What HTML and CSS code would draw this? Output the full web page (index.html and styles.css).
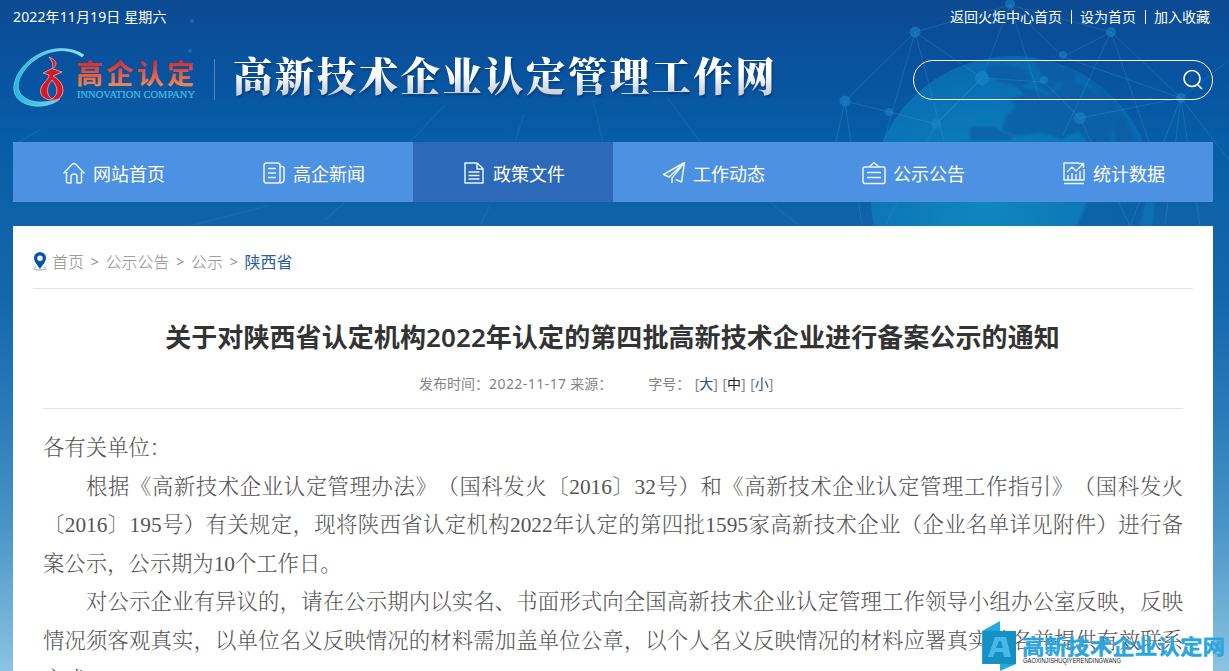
FILE: index.html
```html
<!DOCTYPE html>
<html lang="zh-CN">
<head>
<meta charset="utf-8">
<title>高新技术企业认定管理工作网</title>
<link rel="stylesheet" href="styles.css">
</head>
<body>
<div class="page">
  <svg class="backdrop" width="1229" height="226" viewBox="0 0 1229 226" aria-hidden="true">
    <defs>
      <radialGradient id="globe" gradientUnits="userSpaceOnUse" cx="985" cy="200" r="170">
        <stop offset="0" stop-color="#10a0cc" stop-opacity=".6"/>
        <stop offset=".7" stop-color="#0a8ac6" stop-opacity=".5"/>
        <stop offset="1" stop-color="#0a80c4" stop-opacity=".4"/>
      </radialGradient>
      <filter id="soft"><feGaussianBlur stdDeviation="1.200"/></filter>
    </defs>
    <circle cx="1013" cy="198" r="142" fill="url(#globe)"/>
    <g fill="#0b5aa2" opacity=".7" filter="url(#soft)">
      <path d="M985 67l18-3 22 6 8 10-13 7-20-5-12-7zM1034 60l20 1 10 8 8-2 5 8-8 14-11-9-8 13-11-6 3-12z"/>
      <path d="M1018 87l18 3 12 6 20-14 14 3 22 12 10 18-4 30h-20l-12-14-16 8-20-6-26 3-14-6 4-14 10-9-6-8 14-4zM970 127h26l6 6 10 2v5h-42z"/>
      <path d="M1075 72q40 14 62 70h-22q-2-25-12-38-4-18-28-32zM1087 202h58l-6 24h-62z"/>
    </g>
    <g fill="none" stroke="#42a4dd" stroke-width="1" opacity=".25">
      <path d="M845 101L915 32L1010 5L1111 32L1181 98L1229 60M915 32L873 180M915 32L982 78L1010 5L1063 57L1111 32L1063 135M1010 5L1040 100M845 101L889 112L936 124L982 78L1044 82L1080 118L1181 98L1229 160M845 101L834 150M845 101L862 226M936 124L885 226M1080 118L1130 226L1181 98L1165 226M982 78L936 124M1063 57L1181 98L1200 226M1111 32L1150 145M915 32L945 145"/>
    </g>
    <g fill="none" stroke="#42a4dd" stroke-width="1.500" opacity=".13">
      <path d="M40 130L18 142M270 205L190 226M524 114L515 142M445 105L410 142M593 100L603 142M667 97L700 142M490 205L480 226M770 202L800 226M345 202L325 220"/>
    </g>
    <g fill="#1e8bd1" opacity=".5">
      <circle cx="915" cy="32" r="5.500"/><circle cx="1010" cy="4" r="5"/><circle cx="1111" cy="32" r="5"/>
      <circle cx="845" cy="101" r="5.500"/><circle cx="982" cy="78" r="7"/><circle cx="889" cy="112" r="4"/>
      <circle cx="936" cy="124" r="5"/><circle cx="1080" cy="118" r="6"/><circle cx="1181" cy="98" r="5"/>
      <circle cx="1044" cy="80" r="4"/><circle cx="1063" cy="55" r="4"/><circle cx="192" cy="21" r="2"/><circle cx="190" cy="51" r="2"/>
    </g>
  </svg>

  <div class="topbar">
    <span class="today">2022年11月19日 星期六</span>
    <nav class="toplinks"><a>返回火炬中心首页</a><i></i><a>设为首页</a><i></i><a>加入收藏</a></nav>
  </div>

  <header class="masthead">
    <svg class="logo" width="184" height="64" viewBox="0 0 184 64">
      <defs>
        <linearGradient id="ring" x1="0" y1="0" x2="1" y2="0"><stop offset="0" stop-color="#22b9df"/><stop offset="1" stop-color="#a5e0f3"/></linearGradient>
        <linearGradient id="brand" x1="0" y1="0" x2="0" y2="1"><stop offset=".2" stop-color="#d8282c"/><stop offset=".85" stop-color="#f08a55"/></linearGradient>
      </defs>
      <path d="M71 11C53 -1 25 4 9 24C-5 42 -1 59 21 62C32 63 41 60 47 55C36 58 23 60 14 55C0 48 4 33 17 20C32 6 54 2 69 13Z" fill="url(#ring)" stroke="#72d8ed" stroke-width=".7"/>
      <path d="M36 13C47 18 42 22 40 25C44 26 45 27 49 28L40 32C48 36 52 44 49 51Q46 57 39 56C29 56 25 48 29 42C31 38 36 35 36 31L30 29L40 24C39 20 41 20 36 13ZM39 36C33 43 33 51 39 55C45 51 46 44 39 36Z" fill="#d81828" fill-rule="evenodd" stroke="#f0a0a0" stroke-width=".9"/>
      <text class="logo-cn" x="63" y="40" textLength="118">高企认定</text>
      <text class="logo-en" x="64" y="54" textLength="118" lengthAdjust="spacingAndGlyphs">INNOVATION COMPANY</text>
    </svg>
    <span class="divider"></span>
    <h1 class="site-name">高新技术企业认定管理工作网</h1>
    <div class="search">
      <svg width="22" height="22" viewBox="0 0 22 22" fill="none" stroke="#fff" stroke-width="1.600"><circle cx="10" cy="9.500" r="8"/><path d="M15.500 15.500l4.500 4.500"/></svg>
    </div>
  </header>

  <nav class="mainnav">
    <a><svg viewBox="0 0 24 24"><path d="M1.500 12.500L10 3.500Q12 1.500 14 3.500L22.500 12.500M4.500 11v9.500q0 1.500 1.500 1.500h3v-6q0-3 3-3t3 3v6h3q1.500 0 1.500-1.500V11"/></svg>网站首页</a>
    <a><svg viewBox="0 0 24 24"><rect x="2" y="2" width="16" height="20" rx="2.500"/><path d="M18 5.500h2q2 0 2 2v11q0 3.500-4.500 3.500M6 7.500h8M6 12h8M6 16.500h8"/></svg>高企新闻</a>
    <a class="active"><svg viewBox="0 0 24 24"><path d="M3 2h12l6 5.500V22H3zM15 2v6h6M6.500 11h11M6.500 14.500h11M6.500 18h11"/></svg>政策文件</a>
    <a><svg viewBox="0 0 24 24"><path d="M22.500 1.500L1.500 13.500l5.500 2.500L22.500 1.500l-3 19.500-6-2.500M22.500 1.500L10 17v5"/></svg>工作动态</a>
    <a><svg viewBox="0 0 24 24"><rect x="1" y="6" width="22" height="16.500" rx="1.500"/><path d="M7 6l5-4.500L17 6M5 11.500h14M5 16.500h14"/></svg>公示公告</a>
    <a><svg viewBox="0 0 24 24"><path d="M17 2H2v17h20V8M2 22.500h20M5 11l5-5 4 4 7-7M17 2.500h4.500V7M6 19v-5M10 19v-7M14 19v-6M18 19v-9"/></svg>统计数据</a>
  </nav>

  <main class="content">
    <div class="crumbs">
      <svg width="14" height="19" viewBox="0 0 14 19"><path d="M3 15Q1 15.500 1 16.500C1 18.500 13 18.500 13 16.500Q13 15.500 11 15" fill="none" stroke="#8aa2bd"/><path fill="#0755a5" fill-rule="evenodd" d="M7 0a6 6 0 0 0-6 6c0 4 3.500 7 6 11 2.500-4 6-7 6-11a6 6 0 0 0-6-6zm0 3.500a2.700 2.700 0 1 1 0 5.400 2.700 2.700 0 0 1 0-5.400z"/></svg>
      <a>首页</a><b>&gt;</b><a>公示公告</a><b>&gt;</b><a>公示</a><b>&gt;</b><a class="here">陕西省</a>
    </div>
    <h2 class="title">关于对陕西省认定机构2022年认定的第四批高新技术企业进行备案公示的通知</h2>
    <div class="meta">
      <span>发布时间：<span class="date">2022-11-17</span> 来源：</span>
      <span class="sizes">字号：<span>[<a>大</a>]</span><span>[<a class="mid">中</a>]</span><span>[<a>小</a>]</span></span>
    </div>
    <article class="article">
      <p class="line">各有关单位：</p>
      <p class="line full indent">根据《高新技术企业认定管理办法》（国科发火〔2016〕32号）和《高新技术企业认定管理工作指引》（国科发火</p>
      <p class="line full">〔2016〕195号）有关规定，现将陕西省认定机构2022年认定的第四批1595家高新技术企业（企业名单详见附件）进行备</p>
      <p class="line">案公示，公示期为10个工作日。</p>
      <p class="line full indent">对公示企业有异议的，请在公示期内以实名、书面形式向全国高新技术企业认定管理工作领导小组办公室反映，反映</p>
      <p class="line full">情况须客观真实，以单位名义反映情况的材料需加盖单位公章，以个人名义反映情况的材料应署真实姓名并提供有效联系</p>
      <p class="line">方式。</p>
    </article>
  </main>

  <svg class="watermark" width="249" height="54" viewBox="980 617 249 54">
    <path d="M982 631L1000 621V631H1016V664L1000 671V664H982Z" fill="#24a9df"/>
    <rect x="983" y="631" width="33" height="33" fill="#168fc3"/>
    <path d="M988 657L995 637H1006L1011 657H1004L1003 652H995L993 657ZM996 648H1003L1001 641H999Z" fill="#48b9e6" fill-rule="evenodd"/>
    <text class="wm-cn" x="1022" y="654" textLength="203" lengthAdjust="spacingAndGlyphs">高新技术企业认定网</text>
    <text class="wm-en" x="1023" y="663" textLength="98" lengthAdjust="spacingAndGlyphs">GAOXINJISHUQIYERENDINGWANG</text>
  </svg>
</div>
</body>
</html>
```

FILE: styles.css
```css
* { box-sizing: border-box; margin: 0; padding: 0; }
body {
  font-family: "Noto Sans", "Noto Sans CJK SC", sans-serif;
  font-size: 14px;
  overflow: hidden;
}
.page {
  position: relative;
  height: 671px;
  overflow: hidden;
  padding: 0 16px 0 13px;
  background: linear-gradient(#0b4a92 0, #0854a0 80px, #075da7 140px, #1063a8 226px, #1467ad 300px, #2b7cb9 420px, #4b96c8 530px, #8cc3e2 671px);
}
.backdrop { position: absolute; left: 0; top: 0; }
.topbar {
  position: relative;
  display: flex;
  justify-content: space-between;
  height: 34px;
  line-height: 34px;
  padding-right: 3px;
  color: #fff;
}
.today { letter-spacing: .120px; }
.toplinks { display: flex; align-items: center; }
.toplinks i { width: 1px; height: 14px; margin: 0 8px 0 9px; background: #fff; }
.masthead { position: relative; display: flex; height: 108px; padding-top: 10px; }
.logo { display: block; }
.logo-cn { font: 700 27px "Noto Sans CJK SC", sans-serif; fill: url(#brand); }
.logo-en { font: 9.500px "Liberation Serif", serif; fill: #45bee0; stroke: #45bee0; stroke-width: .2px; }
.divider { width: 1px; height: 41px; margin: 15px 18px 0 17px; background: #4e87c0; }
.site-name {
  height: 56px;
  margin-top: 2px;
  font: 900 39.500px/56px "Noto Serif CJK SC", "Noto Sans CJK SC", serif;
  letter-spacing: 2.350px;
  white-space: nowrap;
  color: transparent;
  background: linear-gradient(#fff 50%, #cfd3d9 82%);
  -webkit-background-clip: text;
  background-clip: text;
  filter: drop-shadow(1px 2px 1px rgba(0, 30, 80, .45));
}
.search {
  display: flex;
  align-items: center;
  justify-content: flex-end;
  width: 300px;
  height: 40px;
  margin: 16px 0 0 auto;
  padding-right: 8px;
  border: 1px solid #fff;
  border-radius: 20px;
}
.mainnav { position: relative; display: grid; grid-template-columns: repeat(6, 200px); height: 60px; }
.mainnav a {
  display: flex;
  align-items: center;
  gap: 7px;
  padding: 1px 0 0 49px;
  font-size: 18px;
  color: #fff;
  background: #4d91e2;
}
.mainnav .active { background: #2d69b9; }
.mainnav svg { width: 24px; height: 24px; fill: none; stroke: #e8f4ff; stroke-width: 1.500; stroke-linejoin: round; }
.content { position: relative; height: 460px; margin-top: 24px; padding: 0 20px; background: #fff; }
.crumbs {
  display: flex;
  align-items: center;
  height: 63px;
  padding-top: 8px;
  border-bottom: 1px solid #e3e3e3;
  font-size: 16px;
  font-weight: 300;
  color: #8c8c8c;
}
.crumbs svg { margin-right: 5px; }
.crumbs b { width: 21.500px; text-align: center; font-size: 14px; font-weight: 400; }
.crumbs .here { color: #2a5da5; font-weight: 400; }
.title {
  margin: 28px 1px 0 0;
  font-size: 26px;
  font-weight: 600;
  line-height: 41px;
  letter-spacing: .090px;
  text-align: center;
  white-space: nowrap;
  color: #333;
}
.meta {
  display: flex;
  gap: 36px;
  height: 51px;
  margin: 0 10px;
  padding-left: 376px;
  line-height: 52px;
  border-bottom: 1px solid #e3e3e3;
  color: #858585;
}
.date { letter-spacing: .450px; }
.sizes { display: flex; gap: 4.500px; }
.sizes a { color: #1d5379; }
.sizes .mid { color: #222; }
.article {
  margin: 20px 10px 0;
  font: 300 21.330px/38.600px "Liberation Serif", "Noto Serif CJK SC", "Noto Sans CJK SC", serif;
  text-spacing-trim: space-all;
  color: #555;
}
.line { height: 38.600px; white-space: nowrap; }
.full { text-align: justify; text-align-last: justify; }
.indent { padding-left: 43px; }
.watermark { position: absolute; left: 980px; top: 617px; }
.wm-cn { font: 700 21px "Noto Sans CJK SC", sans-serif; fill: #2ba5e0; stroke: #2ba5e0; stroke-width: .4px; }
.wm-en { font: 6.500px "Liberation Sans", sans-serif; fill: #222; }
```
